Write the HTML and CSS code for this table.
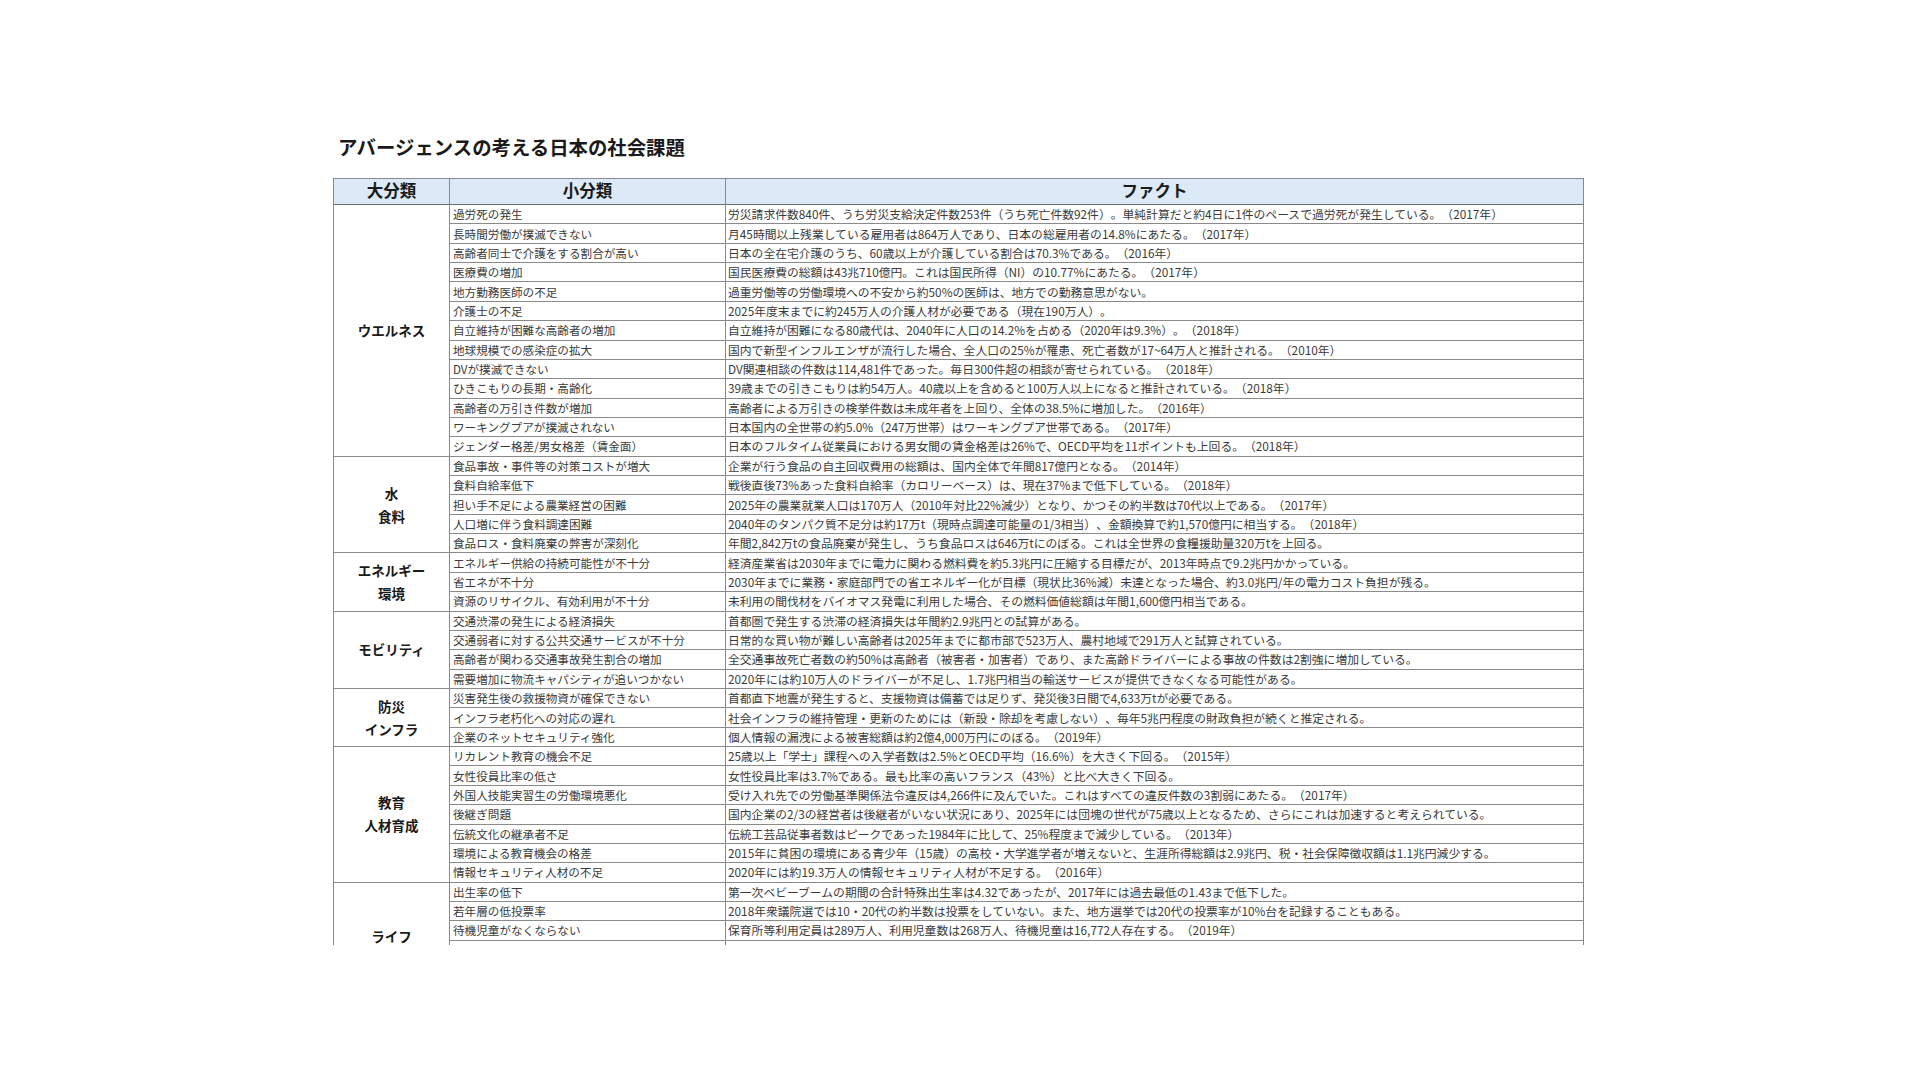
FILE: index.html
```html
<!DOCTYPE html>
<html lang="ja">
<head>
<meta charset="utf-8">
<title>アバージェンスの考える日本の社会課題</title>
<link rel="stylesheet" href="styles.css">
</head>
<body>
<main class="page">
  <h1 class="title">アバージェンスの考える日本の社会課題</h1>
  <div class="clip">
    <div class="grid">
      <div class="hd">大分類</div>
      <div class="hd">小分類</div>
      <div class="hd">ファクト</div>

      <div class="cat span13">ウエルネス</div>
      <div class="sub">過労死の発生</div><div class="fact">労災請求件数840件、うち労災支給決定件数253件（うち死亡件数92件）。単純計算だと約4日に1件のペースで過労死が発生している。（2017年）</div>
      <div class="sub">長時間労働が撲滅できない</div><div class="fact">月45時間以上残業している雇用者は864万人であり、日本の総雇用者の14.8%にあたる。（2017年）</div>
      <div class="sub">高齢者同士で介護をする割合が高い</div><div class="fact">日本の全在宅介護のうち、60歳以上が介護している割合は70.3%である。（2016年）</div>
      <div class="sub">医療費の増加</div><div class="fact">国民医療費の総額は43兆710億円。これは国民所得（NI）の10.77%にあたる。（2017年）</div>
      <div class="sub">地方勤務医師の不足</div><div class="fact">過重労働等の労働環境への不安から約50%の医師は、地方での勤務意思がない。</div>
      <div class="sub">介護士の不足</div><div class="fact">2025年度末までに約245万人の介護人材が必要である（現在190万人）。</div>
      <div class="sub">自立維持が困難な高齢者の増加</div><div class="fact">自立維持が困難になる80歳代は、2040年に人口の14.2%を占める（2020年は9.3%）。（2018年）</div>
      <div class="sub">地球規模での感染症の拡大</div><div class="fact">国内で新型インフルエンザが流行した場合、全人口の25%が罹患、死亡者数が17~64万人と推計される。（2010年）</div>
      <div class="sub">DVが撲滅できない</div><div class="fact">DV関連相談の件数は114,481件であった。毎日300件超の相談が寄せられている。（2018年）</div>
      <div class="sub">ひきこもりの長期・高齢化</div><div class="fact">39歳までの引きこもりは約54万人。40歳以上を含めると100万人以上になると推計されている。（2018年）</div>
      <div class="sub">高齢者の万引き件数が増加</div><div class="fact">高齢者による万引きの検挙件数は未成年者を上回り、全体の38.5%に増加した。（2016年）</div>
      <div class="sub">ワーキングプアが撲滅されない</div><div class="fact">日本国内の全世帯の約5.0%（247万世帯）はワーキングプア世帯である。（2017年）</div>
      <div class="sub">ジェンダー格差/男女格差（賃金面）</div><div class="fact">日本のフルタイム従業員における男女間の賃金格差は26%で、OECD平均を11ポイントも上回る。（2018年）</div>

      <div class="cat span5">水<br>食料</div>
      <div class="sub">食品事故・事件等の対策コストが増大</div><div class="fact">企業が行う食品の自主回収費用の総額は、国内全体で年間817億円となる。（2014年）</div>
      <div class="sub">食料自給率低下</div><div class="fact">戦後直後73%あった食料自給率（カロリーベース）は、現在37%まで低下している。（2018年）</div>
      <div class="sub">担い手不足による農業経営の困難</div><div class="fact">2025年の農業就業人口は170万人（2010年対比22%減少）となり、かつその約半数は70代以上である。（2017年）</div>
      <div class="sub">人口増に伴う食料調達困難</div><div class="fact">2040年のタンパク質不足分は約17万t（現時点調達可能量の1/3相当）、金額換算で約1,570億円に相当する。（2018年）</div>
      <div class="sub">食品ロス・食料廃棄の弊害が深刻化</div><div class="fact">年間2,842万tの食品廃棄が発生し、うち食品ロスは646万tにのぼる。これは全世界の食糧援助量320万tを上回る。</div>

      <div class="cat span3">エネルギー<br>環境</div>
      <div class="sub">エネルギー供給の持続可能性が不十分</div><div class="fact">経済産業省は2030年までに電力に関わる燃料費を約5.3兆円に圧縮する目標だが、2013年時点で9.2兆円かかっている。</div>
      <div class="sub">省エネが不十分</div><div class="fact">2030年までに業務・家庭部門での省エネルギー化が目標（現状比36%減）未達となった場合、約3.0兆円/年の電力コスト負担が残る。</div>
      <div class="sub">資源のリサイクル、有効利用が不十分</div><div class="fact">未利用の間伐材をバイオマス発電に利用した場合、その燃料価値総額は年間1,600億円相当である。</div>

      <div class="cat span4">モビリティ</div>
      <div class="sub">交通渋滞の発生による経済損失</div><div class="fact">首都圏で発生する渋滞の経済損失は年間約2.9兆円との試算がある。</div>
      <div class="sub">交通弱者に対する公共交通サービスが不十分</div><div class="fact">日常的な買い物が難しい高齢者は2025年までに都市部で523万人、農村地域で291万人と試算されている。</div>
      <div class="sub">高齢者が関わる交通事故発生割合の増加</div><div class="fact">全交通事故死亡者数の約50%は高齢者（被害者・加害者）であり、また高齢ドライバーによる事故の件数は2割強に増加している。</div>
      <div class="sub">需要増加に物流キャパシティが追いつかない</div><div class="fact">2020年には約10万人のドライバーが不足し、1.7兆円相当の輸送サービスが提供できなくなる可能性がある。</div>

      <div class="cat span3">防災<br>インフラ</div>
      <div class="sub">災害発生後の救援物資が確保できない</div><div class="fact">首都直下地震が発生すると、支援物資は備蓄では足りず、発災後3日間で4,633万tが必要である。</div>
      <div class="sub">インフラ老朽化への対応の遅れ</div><div class="fact">社会インフラの維持管理・更新のためには（新設・除却を考慮しない）、毎年5兆円程度の財政負担が続くと推定される。</div>
      <div class="sub">企業のネットセキュリティ強化</div><div class="fact">個人情報の漏洩による被害総額は約2億4,000万円にのぼる。（2019年）</div>

      <div class="cat span7">教育<br>人材育成</div>
      <div class="sub">リカレント教育の機会不足</div><div class="fact">25歳以上「学士」課程への入学者数は2.5%とOECD平均（16.6%）を大きく下回る。（2015年）</div>
      <div class="sub">女性役員比率の低さ</div><div class="fact">女性役員比率は3.7%である。最も比率の高いフランス（43%）と比べ大きく下回る。</div>
      <div class="sub">外国人技能実習生の労働環境悪化</div><div class="fact">受け入れ先での労働基準関係法令違反は4,266件に及んでいた。これはすべての違反件数の3割弱にあたる。（2017年）</div>
      <div class="sub">後継ぎ問題</div><div class="fact">国内企業の2/3の経営者は後継者がいない状況にあり、2025年には団塊の世代が75歳以上となるため、さらにこれは加速すると考えられている。</div>
      <div class="sub">伝統文化の継承者不足</div><div class="fact">伝統工芸品従事者数はピークであった1984年に比して、25%程度まで減少している。（2013年）</div>
      <div class="sub">環境による教育機会の格差</div><div class="fact">2015年に貧困の環境にある青少年（15歳）の高校・大学進学者が増えないと、生涯所得総額は2.9兆円、税・社会保障徴収額は1.1兆円減少する。</div>
      <div class="sub">情報セキュリティ人材の不足</div><div class="fact">2020年には約19.3万人の情報セキュリティ人材が不足する。（2016年）</div>

      <div class="cat span6 cat-life">ライフ</div>
      <div class="sub">出生率の低下</div><div class="fact">第一次ベビーブームの期間の合計特殊出生率は4.32であったが、2017年には過去最低の1.43まで低下した。</div>
      <div class="sub">若年層の低投票率</div><div class="fact">2018年衆議院選では10・20代の約半数は投票をしていない。また、地方選挙では20代の投票率が10%台を記録することもある。</div>
      <div class="sub">待機児童がなくならない</div><div class="fact">保育所等利用定員は289万人、利用児童数は268万人、待機児童は16,772人存在する。（2019年）</div>
      <div class="sub"></div><div class="fact"></div>
      <div class="sub"></div><div class="fact"></div>
      <div class="sub"></div><div class="fact"></div>
    </div>
  </div>
</main>
</body>
</html>
```
FILE: styles.css
```css
html, body {
  margin: 0;
  padding: 0;
  background: #ffffff;
}

body {
  font-family: "Noto Sans CJK JP", "Noto Sans", sans-serif;
  color: #3a3a3a;
  text-spacing-trim: space-all;
}

.page {
  padding: 135px 0 0 333px;
}

.title {
  margin: 0 0 19px 0;
  padding-left: 5px;
  font-size: 19.4px;
  line-height: 24px;
  font-weight: 700;
  color: #1a1a1a;
}

.clip {
  width: 1251px;
  height: 767px;
  overflow: hidden;
}

.grid {
  display: grid;
  grid-template-columns: 116px 276px 858px;
  grid-template-rows: 26px;
  grid-auto-rows: 19.37px;
  border-left: 1px solid #8a8a8a;
  border-top: 1px solid #8a8a8a;
  width: 1250px;
}

.grid > div {
  box-sizing: border-box;
  border-right: 1px solid #8a8a8a;
  border-bottom: 1px solid #8a8a8a;
  white-space: nowrap;
  overflow: hidden;
}

.hd {
  background: #dce9f6;
  font-size: 16.5px;
  font-weight: 700;
  color: #1a1a1a;
  display: flex;
  align-items: center;
  justify-content: center;
  padding-bottom: 3px;
  border-bottom: 1px solid #6f6f6f !important;
}

.cat {
  grid-column: 1;
  display: flex;
  align-items: center;
  justify-content: center;
  text-align: center;
  font-size: 13.5px;
  line-height: 23px;
  font-weight: 700;
  color: #1a1a1a;
}

.cat-life {
  padding-bottom: 7px;
}

.span13 { grid-row: span 13; }
.span7 { grid-row: span 7; }
.span6 { grid-row: span 6; }
.span5 { grid-row: span 5; }
.span4 { grid-row: span 4; }
.span3 { grid-row: span 3; }

.sub,
.fact {
  font-size: 11.6px;
  line-height: 18px;
  padding-left: 3px;
  display: flex;
  align-items: center;
}

.sub { grid-column: 2; }
.fact { grid-column: 3; padding-left: 2px; font-size: 11.8px; }
```
